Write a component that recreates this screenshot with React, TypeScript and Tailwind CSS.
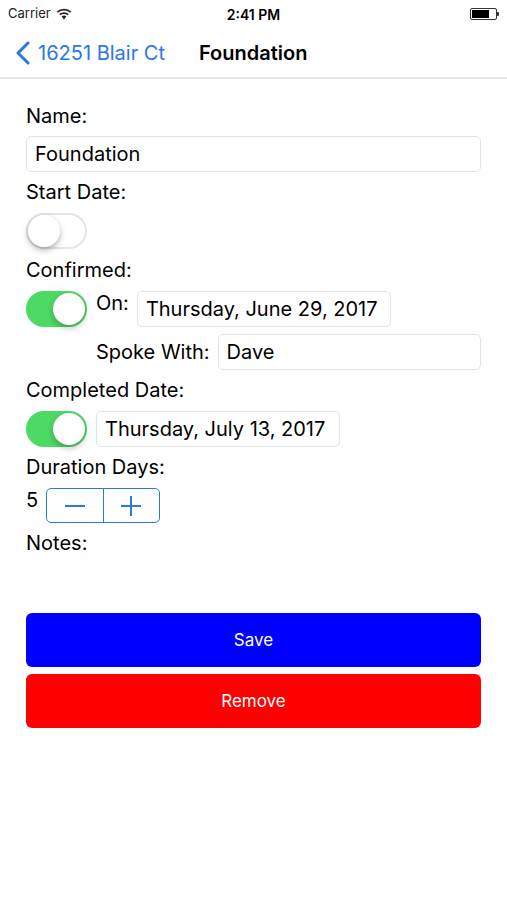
import { useState } from "react";

function Toggle({ on }: { on: boolean }) {
  return (
    <div
      className={
        on
          ? "relative w-[61px] h-[36px] shrink-0 rounded-full bg-[#4cd964]"
          : "relative w-[61px] h-[36px] shrink-0 rounded-full bg-white border-2 border-[#e5e5e5]"
      }
    >
      <div
        className={
          on
            ? "absolute top-[2px] right-[2px] w-[32px] h-[32px] rounded-full bg-white shadow-[0_3px_6px_rgba(0,0,0,0.25)]"
            : "absolute top-0 left-0 w-[32px] h-[32px] rounded-full bg-white shadow-[0_3px_6px_rgba(0,0,0,0.3)]"
        }
      />
    </div>
  );
}

function Field({ value, className }: { value: string; className?: string }) {
  return (
    <div
      className={
        "h-[36px] flex items-center px-[8px] border border-[#e3e3e3] rounded-[5px] text-[20px] text-black whitespace-nowrap " +
        (className ?? "")
      }
    >
      {value}
    </div>
  );
}

export default function App() {
  const [days] = useState(5);

  return (
    <div
      className="w-[507px] h-[900px] bg-white text-black"
      style={{ fontFamily: "Inter, 'Liberation Sans', sans-serif" }}
    >
      {/* status bar */}
      <div className="h-[28px] flex items-center justify-between px-[8px] relative">
        <div className="flex items-center gap-[5px] text-[13px] text-[#222]">
          <span>Carrier</span>
          <svg width="16" height="12" viewBox="0 0 16 12">
            <path d="M8 11.5 L5.6 8.6 A3.6 3.6 0 0 1 10.4 8.6 Z" fill="#222" />
            <path d="M3.8 6.7 A6.2 6.2 0 0 1 12.2 6.7" stroke="#222" strokeWidth="1.8" fill="none" />
            <path d="M1.4 4.2 A9.6 9.6 0 0 1 14.6 4.2" stroke="#222" strokeWidth="1.8" fill="none" />
          </svg>
        </div>
        <div className="absolute left-0 right-0 text-center text-[14px] font-semibold pointer-events-none">
          2:41 PM
        </div>
        <div className="flex items-center">
          <div className="w-[27px] h-[12px] border border-[#333] rounded-[2px] p-[1px]">
            <div className="w-[17px] h-full bg-black" />
          </div>
          <div className="w-[2px] h-[4px] bg-[#333] rounded-r-[1px]" />
        </div>
      </div>

      {/* nav bar */}
      <div className="h-[51px] flex items-center border-b-2 border-[#e8e8e8]">
        <div className="flex items-center text-[#2a78e4] pl-[15px]">
          <svg width="16" height="24" viewBox="0 0 16 24">
            <path d="M13 2 L3 12 L13 22" stroke="#2a78e4" strokeWidth="3" fill="none" strokeLinecap="round" strokeLinejoin="round" />
          </svg>
          <span className="ml-[7px] text-[20px]">16251 Blair Ct</span>
        </div>
        <div className="ml-[34px] text-[20px] font-semibold">Foundation</div>
      </div>

      {/* form */}
      <div className="px-[26px] pt-[26px] text-[20px] leading-[22px] flex flex-col">
        <div>Name:</div>
        <Field value="Foundation" className="mt-[9px] w-full" />
        <div className="mt-[9px]">Start Date:</div>
        <div className="mt-[10px]">
          <Toggle on={false} />
        </div>

        <div className="mt-[10px]">Confirmed:</div>
        <div className="mt-[10px] flex items-start">
          <Toggle on />
          <span className="ml-[9px] mt-[1px]">On:</span>
          <Field value="Thursday, June 29, 2017" className="ml-[8px] w-[254px]" />
        </div>
        <div className="mt-[7px] flex items-center pl-[70px]">
          <span>Spoke With:</span>
          <Field value="Dave" className="ml-[8px] flex-1" />
        </div>

        <div className="mt-[9px]">Completed Date:</div>
        <div className="mt-[10px] flex items-start">
          <Toggle on />
          <Field value="Thursday, July 13, 2017" className="ml-[9px] w-[244px]" />
        </div>

        <div className="mt-[9px]">Duration Days:</div>
        <div className="mt-[10px] flex items-start">
          <span className="mt-[1px]">{days}</span>
          <div className="ml-[8px] flex h-[35px] w-[114px] border border-[#2a78e4] rounded-[5px] text-[#2a78e4]">
            <div className="flex-1 flex items-center justify-center border-r border-[#2a78e4]">
              <svg width="20" height="4" viewBox="0 0 20 4">
                <rect x="0" y="1" width="20" height="2" fill="#2a78e4" />
              </svg>
            </div>
            <div className="flex-1 flex items-center justify-center">
              <svg width="20" height="20" viewBox="0 0 20 20">
                <rect x="0" y="9" width="20" height="2" fill="#2a78e4" />
                <rect x="9" y="0" width="2" height="20" fill="#2a78e4" />
              </svg>
            </div>
          </div>
        </div>

        <div className="mt-[9px]">Notes:</div>

        <button className="mt-[59px] h-[54px] w-full rounded-[6px] bg-[#0000ff] text-white text-[17px]">
          Save
        </button>
        <button className="mt-[7px] h-[54px] w-full rounded-[6px] bg-[#ff0000] text-white text-[17px]">
          Remove
        </button>
      </div>
    </div>
  );
}
